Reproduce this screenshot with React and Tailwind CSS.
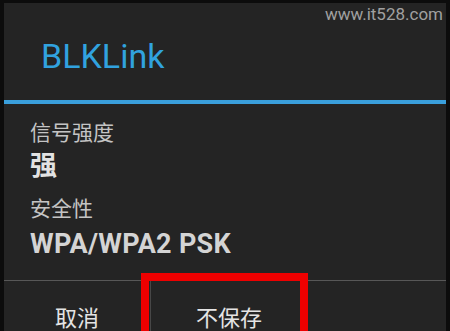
export default function App() {
  const cjk = { fontFamily: 'Roboto, "Noto Sans CJK SC", sans-serif' };
  return (
    <div className="relative w-[450px] h-[331px] overflow-hidden bg-[#0c0c0c] pt-[3px] pl-[4px] pr-[4px]" style={cjk}>
      <div className="h-full bg-[#242424] flex flex-col">
        <div className="h-[97px] flex items-center pl-[37px] pt-[8px]">
          <span className="text-[34px] leading-none text-[#31a2df]">BLKLink</span>
        </div>
        <div className="h-[4px] bg-[#3a9fdc]" />
        <div className="pl-[26px] flex flex-col">
          <div className="mt-[16px] text-[21px] leading-[26px] text-[#c4c4c4]">信号强度</div>
          <div className="mt-[4px] text-[27px] leading-[32px] font-bold text-[#e2e2e2]">强</div>
          <div className="mt-[14px] text-[21px] leading-[26px] text-[#c4c4c4]">安全性</div>
          <div className="mt-[6px] text-[27px] leading-[32px] font-bold text-[#d4d4d4] tracking-[0.3px]">WPA/WPA2 PSK</div>
        </div>
        <div className="mt-auto h-[51px] border-t border-[#575757] flex">
          <div className="w-[146px] flex items-center justify-center pt-[25px] text-[22px] text-[#e4e4e4]">取消</div>
          <div className="w-[158px] border-l border-r border-[#474747] flex items-center justify-center pt-[25px] text-[22px] text-[#e4e4e4]">不保存</div>
          <div className="flex-1" />
        </div>
      </div>
      <div className="absolute left-[141px] top-[273px] w-[167px] h-[70px] border-[8px] border-[#ee0000]" />
      <div className="absolute right-[7px] top-[4px] text-[17px] leading-[20px] text-[#a0a0a0]" style={{ fontFamily: 'Roboto, sans-serif' }}>www.it528.com</div>
    </div>
  );
}
